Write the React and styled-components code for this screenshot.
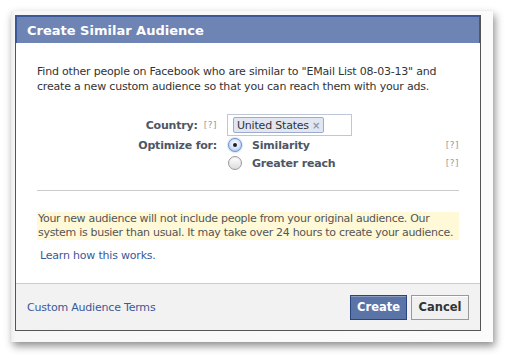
import React from 'react';
import styled, { createGlobalStyle } from 'styled-components';

const GlobalStyle = createGlobalStyle`
  html, body {
    margin: 0;
    padding: 0;
    background: #ffffff;
  }
  body {
    font-family: "DejaVu Sans", "Liberation Sans", sans-serif;
    font-size: 11px;
    letter-spacing: -0.2px;
    color: #333333;
  }
`;

const Page = styled.div`
  padding: 11px 0 0 11px;
  width: 512px;
  height: 360px;
  box-sizing: border-box;
`;

const Frame = styled.div`
  width: 482px;
  height: 331px;
  box-sizing: border-box;
  padding: 4px 12px 11px 4px;
  background: linear-gradient(to right, #ececec 0px, #f7f7f7 4px, #fbfbfb 100%);
  box-shadow: 2px 4px 8px rgba(0, 0, 0, 0.45);
  display: flex;
`;

const Dialog = styled.div`
  flex: 1;
  display: flex;
  flex-direction: column;
  border: 1px solid #555555;
  background: #ffffff;
`;

const TitleBar = styled.div`
  height: 27px;
  box-sizing: border-box;
  background: #6d84b4;
  border: 1px solid #3b5998;
  border-bottom: none;
  padding: 0 10px;
  display: flex;
  align-items: center;
  color: #ffffff;
  font-size: 13px;
  font-weight: bold;
  letter-spacing: 0;
`;

const Body = styled.div`
  flex: 1;
  padding: 21px 21px 0 21px;
  display: flex;
  flex-direction: column;
`;

const Intro = styled.p`
  margin: 0;
  line-height: 15px;
  color: #333333;
`;

const Form = styled.div`
  margin-top: 20px;
  display: grid;
  grid-template-columns: 180px 1fr;
  column-gap: 10px;
  row-gap: 0;
  align-items: start;
`;

const Label = styled.div`
  display: flex;
  justify-content: flex-end;
  align-items: center;
  gap: 6px;
  height: ${p => p.$h || 18}px;
  font-weight: bold;
  color: #4e5665;
`;

const Help = styled.span`
  font-size: 9px;
  font-weight: normal;
  color: #999999;
  letter-spacing: 0.5px;
`;

const TokenInput = styled.div`
  width: 125px;
  height: 22px;
  box-sizing: border-box;
  border: 1px solid #bdc7d8;
  padding: 3px 5px;
  display: flex;
  align-items: center;
`;

const Token = styled.span`
  display: inline-flex;
  align-items: center;
  gap: 3px;
  height: 14px;
  padding: 0 3px;
  background: #e2e6f0;
  border: 1px solid #9dacce;
  border-radius: 2px;
  color: #333333;
  white-space: nowrap;
`;

const Remove = styled.span`
  color: #8a96b2;
  font-size: 10px;
  font-weight: bold;
`;

const Options = styled.div`
  display: flex;
  flex-direction: column;
`;

const Option = styled.div`
  display: flex;
  align-items: center;
  height: 18px;
  font-weight: bold;
  color: #4e5665;
`;

const Radio = styled.span`
  width: 14px;
  height: 14px;
  box-sizing: border-box;
  border-radius: 50%;
  margin-right: 10px;
  margin-left: 1px;
  display: flex;
  align-items: center;
  justify-content: center;
  border: 1px solid ${p => (p.$checked ? '#6f8fc7' : '#9a9a9a')};
  background: ${p =>
    p.$checked
      ? 'radial-gradient(circle at 50% 40%, #ffffff 0%, #d7e6fb 50%, #8fb1e3 100%)'
      : 'linear-gradient(#ffffff, #dcdcdc)'};
  box-shadow: ${p => (p.$checked ? '0 0 2px #7fa4dc' : 'inset 0 1px 1px rgba(0,0,0,0.08)')};

  &::after {
    content: '';
    display: ${p => (p.$checked ? 'block' : 'none')};
    width: 4px;
    height: 4px;
    border-radius: 50%;
    background: #222222;
  }
`;

const OptionHelp = styled(Help)`
  margin-left: auto;
`;

const Divider = styled.hr`
  margin: 18px 0 0 0;
  border: none;
  border-top: 1px solid #cccccc;
`;

const Notice = styled.div`
  margin-top: 21px;
  background: #fff9d7;
  padding: 0 1px;
  line-height: 14px;
  letter-spacing: -0.3px;
  white-space: nowrap;
  color: #555555;
`;

const Link = styled.a`
  color: #3b5998;
  text-decoration: none;
  cursor: pointer;
`;

const LearnLink = styled(Link)`
  margin-top: 9px;
  margin-left: 3px;
  line-height: 14px;
  align-self: flex-start;
`;

const Footer = styled.div`
  height: 47px;
  box-sizing: border-box;
  border-top: 1px solid #cccccc;
  background: #f2f2f2;
  padding: 0 11px 0 11px;
  display: flex;
  align-items: center;
  gap: 4px;
`;

const FooterLink = styled(Link)`
  margin-right: auto;
`;

const Button = styled.button`
  height: 25px;
  box-sizing: border-box;
  padding: 0 6px;
  font-family: "DejaVu Sans", "Liberation Sans", sans-serif;
  font-size: 11.5px;
  font-weight: bold;
  letter-spacing: 0;
  border: 1px solid ${p => (p.$primary ? '#29447e' : '#999999')};
  background: ${p => (p.$primary ? '#5b74a8' : '#f0f0f0')};
  color: ${p => (p.$primary ? '#ffffff' : '#333333')};
  box-shadow: ${p => (p.$primary ? 'inset 0 1px 0 #8a9cc2' : 'inset 0 1px 0 #ffffff')};
  width: ${p => (p.$primary ? 57 : 58)}px;
`;

export default function App() {
  return (
    <Page>
      <GlobalStyle />
      <Frame>
        <Dialog>
          <TitleBar>Create Similar Audience</TitleBar>
          <Body>
            <Intro>
              Find other people on Facebook who are similar to "EMail List 08-03-13" and
              create a new custom audience so that you can reach them with your ads.
            </Intro>
            <Form>
              <Label $h={22}>
                Country: <Help>[?]</Help>
              </Label>
              <TokenInput>
                <Token>
                  United States <Remove>×</Remove>
                </Token>
              </TokenInput>
              <Label>Optimize for:</Label>
              <Options>
                <Option>
                  <Radio $checked />
                  Similarity
                  <OptionHelp>[?]</OptionHelp>
                </Option>
                <Option>
                  <Radio />
                  Greater reach
                  <OptionHelp>[?]</OptionHelp>
                </Option>
              </Options>
            </Form>
            <Divider />
            <Notice>
              Your new audience will not include people from your original audience. Our
              <br />
              system is busier than usual. It may take over 24 hours to create your audience.
            </Notice>
            <LearnLink>Learn how this works.</LearnLink>
          </Body>
          <Footer>
            <FooterLink>Custom Audience Terms</FooterLink>
            <Button $primary>Create</Button>
            <Button>Cancel</Button>
          </Footer>
        </Dialog>
      </Frame>
    </Page>
  );
}
